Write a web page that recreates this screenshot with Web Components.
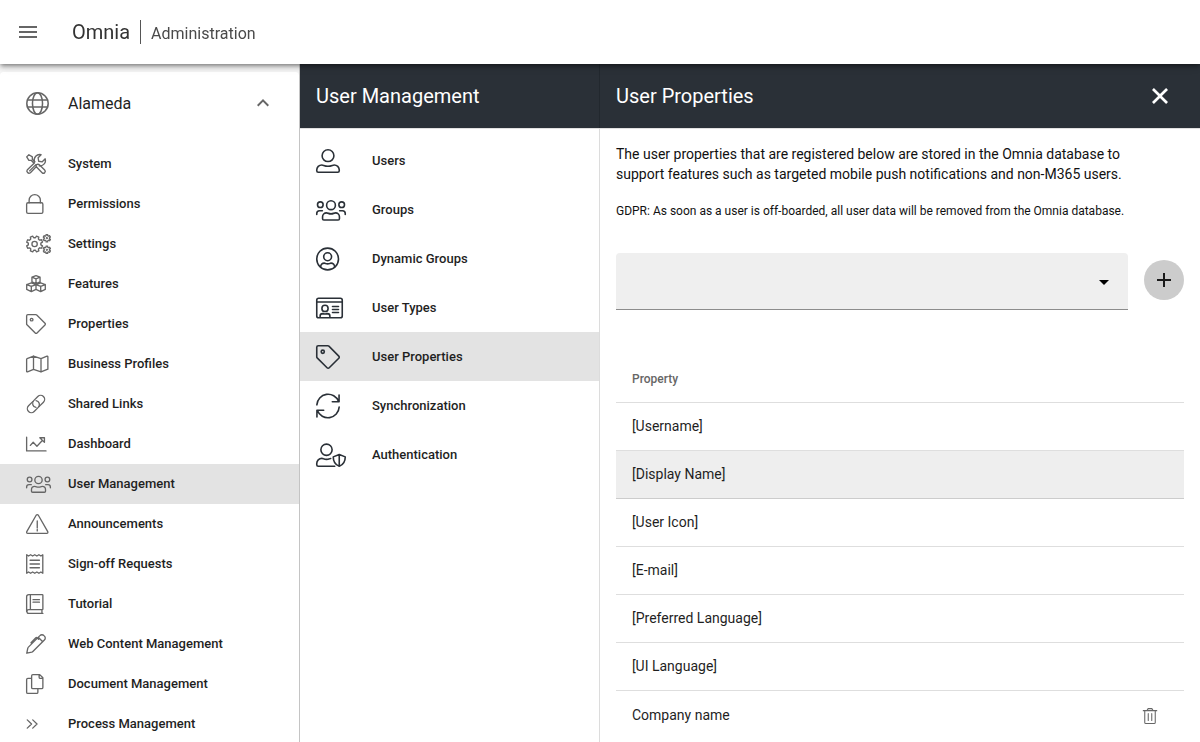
<!DOCTYPE html>
<html lang="en">
<head>
<meta charset="utf-8">
<meta name="viewport" content="width=device-width, initial-scale=1">
<title>Omnia Administration</title>
<style>
  body { margin: 0; font-family: Roboto, "Liberation Sans", sans-serif; color: #1f1f1f; background: #fff; }
</style>
</head>
<body>
<om-shell>
  <om-topbar slot="top" product="Omnia" section="Administration"></om-topbar>
  <om-sidebar slot="side" heading="Alameda">
    <om-item icon="tools">System</om-item>
    <om-item icon="lock">Permissions</om-item>
    <om-item icon="cogs">Settings</om-item>
    <om-item icon="cubes">Features</om-item>
    <om-item icon="tag">Properties</om-item>
    <om-item icon="map">Business Profiles</om-item>
    <om-item icon="link">Shared Links</om-item>
    <om-item icon="chart">Dashboard</om-item>
    <om-item icon="users" selected>User Management</om-item>
    <om-item icon="warning">Announcements</om-item>
    <om-item icon="receipt">Sign-off Requests</om-item>
    <om-item icon="book">Tutorial</om-item>
    <om-item icon="pen">Web Content Management</om-item>
    <om-item icon="copy">Document Management</om-item>
    <om-item icon="angles">Process Management</om-item>
  </om-sidebar>
  <om-panel slot="menu" heading="User Management">
    <om-menu>
      <om-item large icon="user">Users</om-item>
      <om-item large icon="users">Groups</om-item>
      <om-item large icon="usercircle">Dynamic Groups</om-item>
      <om-item large icon="idcard">User Types</om-item>
      <om-item large selected icon="tag">User Properties</om-item>
      <om-item large icon="sync">Synchronization</om-item>
      <om-item large icon="usershield">Authentication</om-item>
    </om-menu>
  </om-panel>
  <om-panel slot="detail" heading="User Properties" closable>
    <om-properties></om-properties>
  </om-panel>
</om-shell>

<script>
const define = (name, html, setup) => {
  const template = document.createElement('template');
  template.innerHTML = '<style>*{box-sizing:border-box}</style>' + html;
  customElements.define(name, class extends HTMLElement {
    connectedCallback() {
      if (this.shadowRoot) return;
      const root = this.attachShadow({ mode: 'open' });
      root.append(template.content.cloneNode(true));
      if (setup) setup(this, root);
    }
  });
};

/* Outline of a cog wheel with n teeth. */
const gear = (cx, cy, inner, outer, n, turn = 0) => {
  const points = [];
  const step = 2 * Math.PI / n;
  for (let i = 0; i < n; i++) {
    [[-.32, inner], [-.2, outer], [.2, outer], [.32, inner]].forEach(([a, r]) => {
      const t = (i + a) * step + turn;
      points.push((cx + r * Math.cos(t)).toFixed(0) + ' ' + (cy + r * Math.sin(t)).toFixed(0));
    });
  }
  return '<path d="M' + points.join('L') + 'z"/>';
};

/* Line icons on a 512 unit high grid: [width, markup]. */
const LINE = {
  globe: [512, '<circle cx="256" cy="256" r="238"/><ellipse cx="256" cy="256" rx="112" ry="238"/><path d="M32 176h448M32 336h448"/>'],
  tools: [512, '<path d="M18 74l56-56 88 56v58l66 66M18 74l56 88h58l66 66"/><path d="M214 214c-16-58-4-114 34-156 36-38 88-52 138-40l-76 76 14 92 92 14 76-76c14 50 0 106-38 142-30 30-72 44-112 40M252 272L92 432M214 230L36 402a54 54 0 0 0 76 76l154-160M268 276c30-24 54-20 80 6l130 130a46 46 0 0 1-66 66L282 348c-24-24-34-50-14-72"/>'],
  lock: [448, '<rect x="16" y="224" width="416" height="272" rx="36"/><path d="M80 224v-64a144 144 0 0 1 288 0v64"/>'],
  cogs: [640, gear(220, 256, 162, 208, 8, .39) + '<circle cx="220" cy="256" r="68"/>' + gear(534, 108, 68, 96, 6, .52) + gear(534, 404, 68, 96, 6, .52) + '<circle cx="534" cy="108" r="12"/><circle cx="534" cy="404" r="12"/>'],
  cubes: [512, '<path d="M256 44l104 38v118l-104 44-104-44V82zM152 82l104 40 104-40M256 122v122M136 230l120 40v126l-120 56-118-56V270zM18 270l118 44 120-44M136 314v138M376 230l118 40v126l-118 56-120-56V270zM256 270l120 44 118-44M376 314v138"/>'],
  tag: [512, '<path d="M48 16h204a32 32 0 0 1 23 9l211 211a32 32 0 0 1 0 46L282 486a32 32 0 0 1-46 0L25 275a32 32 0 0 1-9-23V48a32 32 0 0 1 32-32z"/><circle cx="144" cy="144" r="34"/>'],
  map: [576, '<path d="M28 118L192 52l192 66 154-62q22-6 22 16v316l-176 72-192-66-154 62q-22 6-22-16V136q0-14 12-18zM192 52v342M384 118v342"/>'],
  link: [512, '<g transform="translate(256 256) rotate(-45)"><path d="M-6-102h-162a102 102 0 0 0 0 204H-20A102 102 0 0 0 62-60"/><path d="M6 102h162a102 102 0 0 0 0-204H20A102 102 0 0 0-62 60"/></g>'],
  chart: [512, '<path d="M16 80v352h496"/><path d="M112 292l72-80 96 100 138-144M354 96h118v118z"/>'],
  users: [640, '<circle cx="320" cy="154" r="94"/><circle cx="92" cy="142" r="60"/><circle cx="548" cy="142" r="60"/><path d="M168 468h304a28 28 0 0 0 28-28v-38a84 84 0 0 0-84-84q-12 0-42 10a160 160 0 0 1-108 0q-30-10-42-10a84 84 0 0 0-84 84v38a28 28 0 0 0 28 28zM16 352v-20a60 60 0 0 1 60-60h60M624 352v-20a60 60 0 0 0-60-60h-60"/>'],
  warning: [576, '<path d="M260 32q28-32 56 0l240 418q16 40-28 46H48q-44-6-28-46zM288 176v180M288 396v36"/>'],
  receipt: [448, '<path d="M18 20l48 32 52-32 52 32 54-32 54 32 52-32 52 32 48-32v472l-48-32-52 32-52-32-54 32-54-32-52 32-52-32-48 32zM104 160h240M104 256h240M104 352h240"/>'],
  book: [448, '<path d="M72 16h344q16 0 16 16v352q0 16-16 16H72a48 48 0 0 0 0 96h360M72 16a56 56 0 0 0-56 56v376M112 16v384M408 400v96M180 144h164M180 208h164"/>'],
  pen: [512, '<path d="M20 492l26-128q4-16 16-28L356 42a70 70 0 0 1 104 0l10 10a70 70 0 0 1 0 104L176 450q-12 12-28 16zM314 84l114 114M128 222l124-124q16-16 32 0l40 40"/>'],
  copy: [448, '<path d="M176 16h176l80 80v248q0 32-32 32H176q-32 0-32-32V48q0-32 32-32zM336 16v64q0 32 32 32h64M144 112H48q-32 0-32 32v320q0 32 32 32h224q32 0 32-32v-88"/>'],
  angles: [320, '<path d="M32 150l110 106L32 362M172 150l110 106-110 106"/>'],
  user: [512, '<circle cx="256" cy="142" r="126"/><path d="M48 496h416a32 32 0 0 0 32-32v-16a108 108 0 0 0-108-108q-16 0-40 10a250 250 0 0 1-184 0q-24-10-40-10A108 108 0 0 0 16 448v16a32 32 0 0 0 32 32z"/>'],
  usercircle: [496, '<circle cx="248" cy="256" r="232"/><circle cx="248" cy="208" r="84"/><path d="M100 432v-12a76 76 0 0 1 76-76q10 0 28 8a120 120 0 0 0 88 0q18-8 28-8a76 76 0 0 1 76 76v12"/>'],
  idcard: [576, '<rect x="16" y="48" width="544" height="416" rx="40"/><path d="M16 128h544M352 224h128M352 288h128M352 352h128"/><circle cx="192" cy="264" r="66"/><path d="M88 448v-20q0-52 52-52 52 18 104 0 52 0 52 52v20"/>'],
  sync: [512, '<path d="M492 20v144H348M482 160A240 240 0 0 0 18 232M20 492V348h144M30 352a240 240 0 0 0 464-72"/>'],
  usershield: [640, '<circle cx="224" cy="144" r="120"/><path d="M400 496H48a32 32 0 0 1-32-32v-28a108 108 0 0 1 108-108q14 0 36 10a180 180 0 0 0 128 0q14-6 26-8M496 244l128 52c0 100-40 164-128 200-88-36-128-100-128-200zM496 244v252"/>'],
  trash: [448, '<path d="M8 84h432M132 76l32-56h120l32 56M56 84v376q0 36 36 36h264q36 0 36-36V84M168 180v220M280 180v220"/>']
};

/* Solid glyphs on a 24 unit grid. */
const SOLID = {
  menu: 'M3 6h18v2H3zM3 11h18v2H3zM3 16h18v2H3z',
  up: 'M7.41 15.41L12 10.83l4.59 4.58L18 14l-6-6-6 6z',
  down: 'M7 10l5 5 5-5z',
  plus: 'M19 13h-6v6h-2v-6H5v-2h6V5h2v6h6z',
  close: 'M5.9 4L4 5.9l6.1 6.1L4 18.1 5.9 20l6.1-6.1 6.1 6.1 1.9-1.9-6.1-6.1L20 5.9 18.1 4 12 10.1z'
};

define('om-icon', `
  <style>
    :host { display: block; height: var(--icon-size, 20px); color: inherit; }
    svg { display: block; height: 100%; width: auto; overflow: visible; }
    .line { fill: none; stroke: currentColor; stroke-width: 34; stroke-linejoin: round; stroke-linecap: round; }
    .solid { fill: currentColor; }
    div { height: 100%; }
  </style>
  <div></div>`, (host, root) => {
  const name = host.getAttribute('name');
  root.querySelector('div').innerHTML = SOLID[name]
    ? `<svg class="solid" viewBox="0 0 24 24" aria-hidden="true"><path d="${SOLID[name]}"/></svg>`
    : `<svg class="line" viewBox="0 0 ${LINE[name][0]} 512" aria-hidden="true">${LINE[name][1]}</svg>`;
});

define('om-shell', `
  <style>
    :host { display: grid; grid-template: auto minmax(0, 1fr) / 300px 300px minmax(0, 1fr); height: 100vh; overflow: hidden; }
    .top { grid-column: 1 / -1; z-index: 2; }
    .col { min-height: 0; overflow: hidden auto; scrollbar-width: none; }
    .side { background: #f5f5f5; border-right: 1px solid #c4c4c4; padding-top: 8px; }
    .menu { padding-right: 1px; background: linear-gradient(#22282e 64px, #dcdcdc 64px); }
  </style>
  <div class="top"><slot name="top"></slot></div>
  <div class="col side"><slot name="side"></slot></div>
  <div class="col menu"><slot name="menu"></slot></div>
  <main class="col"><slot name="detail"></slot></main>`);

define('om-topbar', `
  <style>
    :host { display: block; }
    header { display: flex; align-items: center; height: 64px; padding: 0 16px; background: #fff;
      box-shadow: 0 2px 4px -1px rgba(0,0,0,.4), 0 4px 5px rgba(0,0,0,.14), 0 1px 10px rgba(0,0,0,.12); }
    button { border: 0; padding: 0; margin-right: 32px; background: none; color: #666; --icon-size: 24px; }
    .product { font-size: 20px; line-height: 24px; color: #333; padding-right: 10px; border-right: 1px solid #555; }
    .section { font-size: 16px; line-height: 24px; color: #4a4a4a; padding: 3px 0 0 10px; }
  </style>
  <header>
    <button type="button" aria-label="Open menu"><om-icon name="menu"></om-icon></button>
    <span class="product"></span><span class="section"></span>
  </header>`, (host, root) => {
  root.querySelector('.product').textContent = host.getAttribute('product');
  root.querySelector('.section').textContent = host.getAttribute('section');
});

define('om-sidebar', `
  <style>
    :host { display: block; background: #fff; border-radius: 4px 4px 0 0; min-height: 100%; }
    button { display: flex; align-items: center; width: 100%; height: 62px; padding: 0 24px 0 26px; border: 0; background: none;
      font: inherit; font-size: 16px; color: #1f1f1f; text-align: left; }
    .globe { width: 42px; color: #666; --icon-size: 23px; }
    .name { flex: 1; }
    .chevron { color: #666; --icon-size: 24px; }
    nav { padding-top: 10px; }
  </style>
  <button type="button" aria-expanded="true">
    <om-icon class="globe" name="globe"></om-icon><span class="name"></span><om-icon class="chevron" name="up"></om-icon>
  </button>
  <nav><slot></slot></nav>`, (host, root) => {
  root.querySelector('.name').textContent = host.getAttribute('heading');
});

define('om-menu', `
  <style>:host { display: block; padding-top: 8px; }</style>
  <nav><slot></slot></nav>`);

define('om-item', `
  <style>
    :host { display: block; --icon-size: 20px; }
    :host([large]) { --icon-size: 24px; }
    a { display: flex; align-items: center; height: 40px; padding-left: 26px; color: #1f1f1f; text-decoration: none;
      font-size: 13px; font-weight: 500; line-height: 20px; }
    om-icon { flex: none; width: 42px; color: #666; }
    :host([large]) a { height: 49px; padding-left: 16px; }
    :host([large]) om-icon { width: 56px; color: #2a3037; }
    :host([selected]) a { background: #e3e3e3; }
  </style>
  <a href="#"><span><slot></slot></span></a>`, (host, root) => {
  const link = root.querySelector('a');
  const icon = document.createElement('om-icon');
  icon.setAttribute('name', host.getAttribute('icon'));
  link.prepend(icon);
  if (host.hasAttribute('selected')) link.setAttribute('aria-current', 'page');
});

define('om-panel', `
  <style>
    :host { display: block; background: #fff; min-height: 100%; }
    header { display: flex; align-items: center; justify-content: space-between; height: 64px; padding: 0 28px 0 16px;
      background: #2a3037; color: #fff; box-shadow: 0 1px #e0e0e0; }
    h2 { margin: 0; font-size: 20px; font-weight: 400; line-height: 32px; }
    button { border: 0; padding: 0; background: none; color: #fff; --icon-size: 24px; }
  </style>
  <header><h2></h2></header>
  <slot></slot>`, (host, root) => {
  root.querySelector('h2').textContent = host.getAttribute('heading');
  if (host.hasAttribute('closable')) {
    root.querySelector('header').insertAdjacentHTML('beforeend',
      '<button type="button" aria-label="Close"><om-icon name="close"></om-icon></button>');
  }
});

define('om-properties', `
  <style>
    :host { display: block; padding: 16px; color: #1f1f1f; }
    p { margin: 0 0 17px; font-size: 14px; line-height: 20px; color: #111; }
    .note { font-size: 12px; margin-bottom: 32px; }
    form { display: flex; align-items: center; gap: 16px; margin: 0 0 45px; }
    .field { flex: 1; display: grid; align-items: center; }
    .field > * { grid-area: 1 / 1; }
    select { appearance: none; width: 100%; height: 57px; padding: 0 48px 0 12px; border: 0; border-bottom: 1px solid #8c8c8c;
      border-radius: 4px 4px 0 0; background: #efefef; font: inherit; }
    .caret { justify-self: end; margin-right: 12px; color: #000; --icon-size: 24px; pointer-events: none; }
    .add { display: grid; place-items: center; width: 40px; height: 40px; margin-bottom: 4px; padding: 0; border: 0;
      border-radius: 50%; background: #ccc; color: #1a1a1a; --icon-size: 24px; }
    table { width: 100%; border-collapse: separate; border-spacing: 0; font-size: 14px; line-height: 20px; }
    th, td { height: 48px; padding: 0 16px; text-align: left; border-bottom: 1px solid #dedede; }
    td { padding-bottom: 1px; }
    th { font-size: 12px; font-weight: 500; color: #666; }
    tr.hover td { background: #eee; border-bottom-color: #ccc; }
    tbody tr:last-child td { border-bottom: 0; padding-bottom: 0; }
    td:last-child { width: 80px; padding-right: 27px; text-align: right; }
    td button { display: inline-block; vertical-align: middle; border: 0; padding: 0; background: none; color: #666; --icon-size: 16px; }
  </style>
  <p>The user properties that are registered below are stored in the Omnia database to<br>support features such as targeted mobile push notifications and non-M365 users.</p>
  <p class="note">GDPR: As soon as a user is off-boarded, all user data will be removed from the Omnia database.</p>
  <form>
    <div class="field">
      <select aria-label="Property to add"><option></option></select>
      <om-icon class="caret" name="down"></om-icon>
    </div>
    <button class="add" type="button" aria-label="Add property"><om-icon name="plus"></om-icon></button>
  </form>
  <table>
    <thead><tr><th scope="col" colspan="2">Property</th></tr></thead>
    <tbody>
      <tr><td>[Username]</td><td></td></tr>
      <tr class="hover"><td>[Display Name]</td><td></td></tr>
      <tr><td>[User Icon]</td><td></td></tr>
      <tr><td>[E-mail]</td><td></td></tr>
      <tr><td>[Preferred Language]</td><td></td></tr>
      <tr><td>[UI Language]</td><td></td></tr>
      <tr><td>Company name</td><td><button type="button" aria-label="Delete Company name"><om-icon name="trash"></om-icon></button></td></tr>
    </tbody>
  </table>`);
</script>
</body>
</html>
